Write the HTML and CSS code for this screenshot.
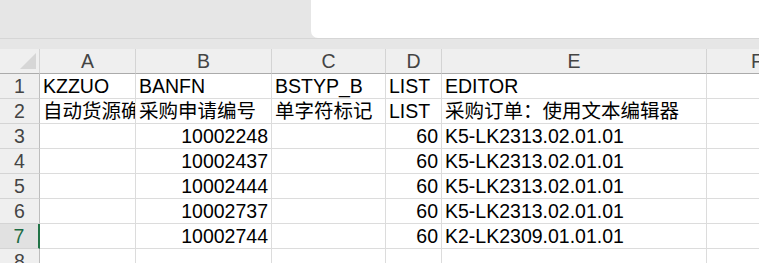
FILE: index.html
```html
<!DOCTYPE html>
<html lang="zh-CN">
<head>
  <meta charset="UTF-8">
  <title>Sheet1</title>
  <link rel="stylesheet" href="styles.css">
</head>
<body>
  <header class="topbar">
    <div class="namebox"></div>
  </header>
  <div class="band"></div>

  <div class="sheet">
    <div class="corner">
      <svg width="16" height="16" viewBox="0 0 16 16"><polygon points="16,0 16,16 0,16" fill="#d6d6d6"/></svg>
    </div>
    <div class="col-head">A</div>
    <div class="col-head">B</div>
    <div class="col-head">C</div>
    <div class="col-head">D</div>
    <div class="col-head">E</div>
    <div class="col-head">F</div>

    <div class="row-head">1</div>
    <div class="cell">KZZUO</div>
    <div class="cell">BANFN</div>
    <div class="cell">BSTYP_B</div>
    <div class="cell">LIST</div>
    <div class="cell">EDITOR</div>
    <div class="cell"></div>

    <div class="row-head">2</div>
    <div class="cell">自动货源确定</div>
    <div class="cell">采购申请编号</div>
    <div class="cell">单字符标记</div>
    <div class="cell">LIST</div>
    <div class="cell">采购订单：使用文本编辑器</div>
    <div class="cell"></div>

    <div class="row-head">3</div>
    <div class="cell"></div>
    <div class="cell num">10002248</div>
    <div class="cell"></div>
    <div class="cell num">60</div>
    <div class="cell">K5-LK2313.02.01.01</div>
    <div class="cell"></div>

    <div class="row-head">4</div>
    <div class="cell"></div>
    <div class="cell num">10002437</div>
    <div class="cell"></div>
    <div class="cell num">60</div>
    <div class="cell">K5-LK2313.02.01.01</div>
    <div class="cell"></div>

    <div class="row-head">5</div>
    <div class="cell"></div>
    <div class="cell num">10002444</div>
    <div class="cell"></div>
    <div class="cell num">60</div>
    <div class="cell">K5-LK2313.02.01.01</div>
    <div class="cell"></div>

    <div class="row-head">6</div>
    <div class="cell"></div>
    <div class="cell num">10002737</div>
    <div class="cell"></div>
    <div class="cell num">60</div>
    <div class="cell">K5-LK2313.02.01.01</div>
    <div class="cell"></div>

    <div class="row-head active">7</div>
    <div class="cell"></div>
    <div class="cell num">10002744</div>
    <div class="cell"></div>
    <div class="cell num">60</div>
    <div class="cell">K2-LK2309.01.01.01</div>
    <div class="cell"></div>

    <div class="row-head">8</div>
    <div class="cell"></div>
    <div class="cell"></div>
    <div class="cell"></div>
    <div class="cell"></div>
    <div class="cell"></div>
    <div class="cell"></div>
  </div>
</body>
</html>
```

FILE: styles.css
```css
* {
  margin: 0;
  padding: 0;
  box-sizing: border-box;
}

html, body {
  overflow: hidden;
}

body {
  background: #e6e6e6;
  font-family: 'Liberation Sans', 'Noto Sans CJK SC', sans-serif;
  font-size: 19.5px;
  color: #000;
}

.topbar {
  height: 38px;
  display: flex;
  justify-content: flex-end;
}

.namebox {
  width: 448px;
  height: 38px;
  background: #fff;
  border-bottom-left-radius: 7px;
}

.band {
  height: 11px;
  border-top: 1px solid #d6d6d6;
  background: #e6e6e6;
}

.sheet {
  display: grid;
  grid-template-columns: 40px 96px 136px 114px 56px 265px 101px;
  grid-auto-rows: 25px;
  width: max-content;
  background: #fff;
}

.corner {
  background: #efefef;
  border-right: 1px solid #d4d4d4;
  border-bottom: 1px solid #ababab;
  display: flex;
  justify-content: flex-end;
  align-items: flex-end;
  padding: 0 3px 4px 0;
}

.corner svg {
  display: block;
}

.col-head {
  background: #efefef;
  border-right: 1px solid #d4d4d4;
  border-bottom: 1px solid #ababab;
  color: #444;
  text-align: center;
  line-height: 24px;
}

.row-head {
  background: #efefef;
  border-right: 1px solid #bdbdbd;
  border-bottom: 1px solid #d4d4d4;
  color: #444;
  text-align: center;
  line-height: 24px;
}

.row-head.active {
  background: #e1e1e1;
  color: #1d6b43;
  border-right: 2px solid #217346;
}

.cell {
  border-right: 1px solid #dcdcdc;
  border-bottom: 1px solid #dcdcdc;
  line-height: 24px;
  padding: 0 3px;
  white-space: nowrap;
  overflow: hidden;
}

.num {
  text-align: right;
}
```
